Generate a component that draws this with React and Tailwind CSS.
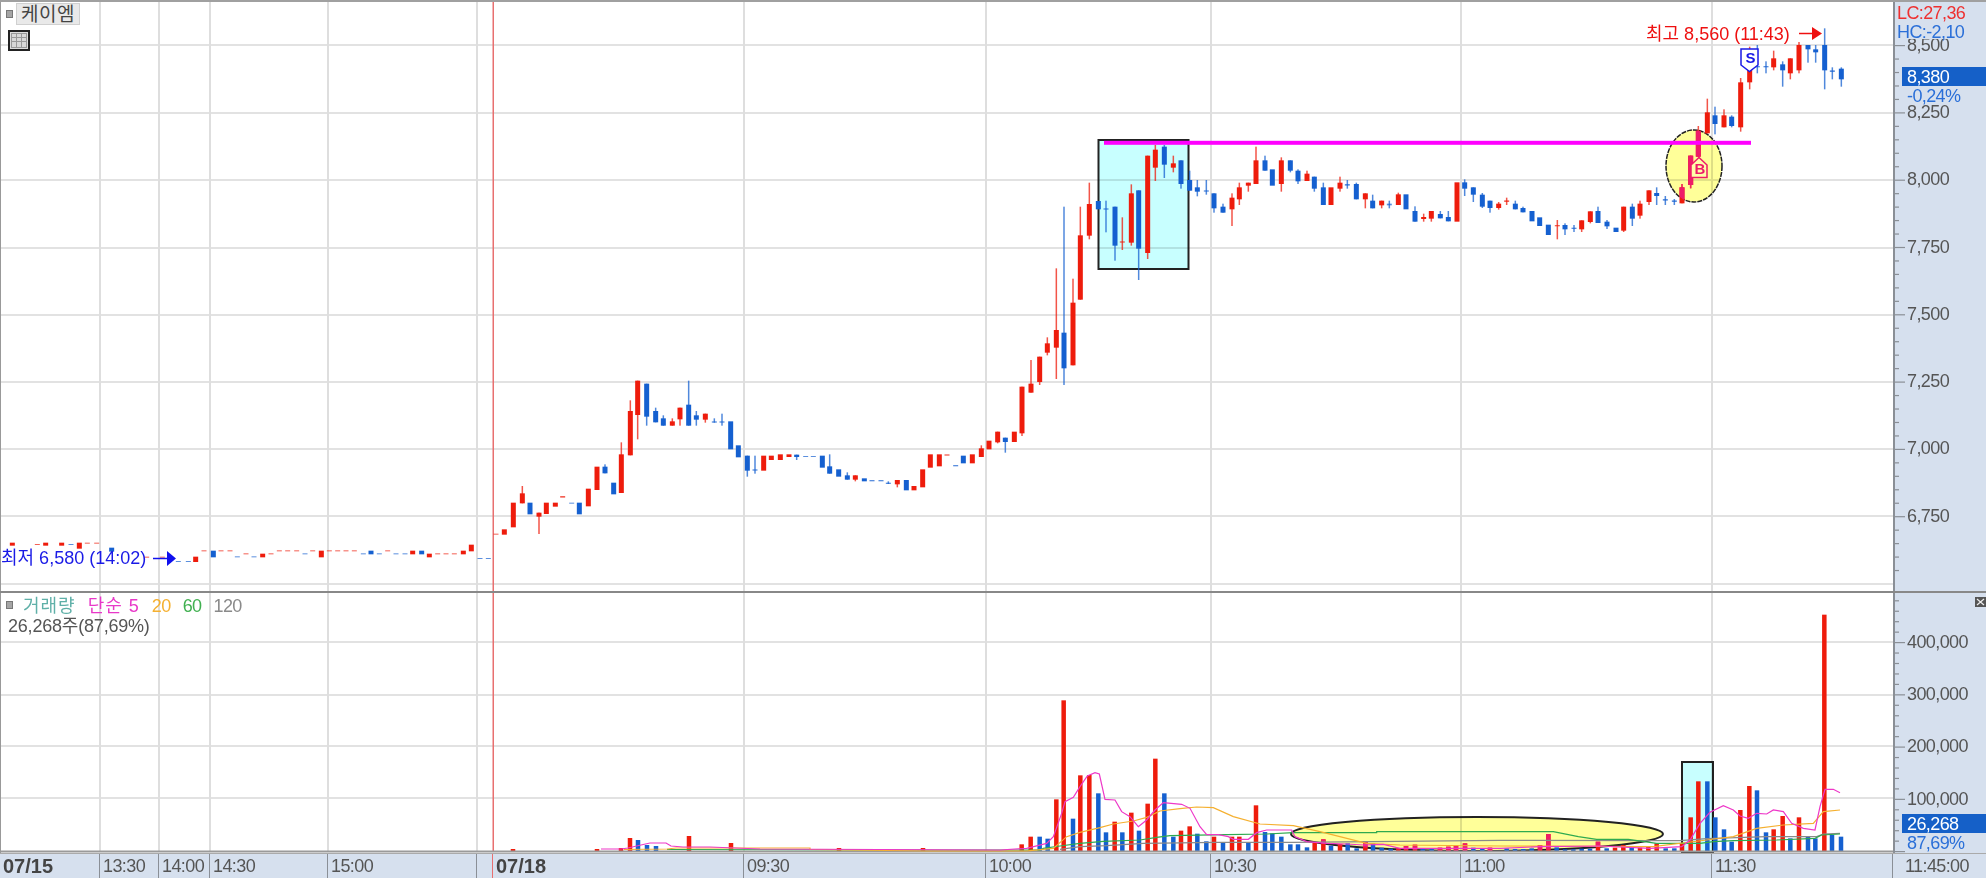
import React from "react";

const RED = "#ee1c0c";
const BLUE = "#1560d0";
const GRIDX = [100, 159, 210, 328, 477, 744, 986, 1211, 1461, 1712];

const z = (ox, oy, list) =>
  list.map(([x, wt, bt, bb, wb, c]) => ({
    x: ox + x / 3,
    wt: wt ? oy + wt / 3 : 0,
    bt: oy + bt / 3,
    bb: oy + bb / 3,
    wb: wb ? oy + wb / 3 : 0,
    c,
  }));

const candles = [
  ...z(0, 500, [
    [37,0,128,137,0,"r"],[112,0,132,135,0,"r"],[137,0,128,137,0,"r"],[185,0,128,137,0,"r"],[213,0,132,135,0,"b"],
    [238,0,128,146,0,"r"],[262,0,128,131,0,"r"],[290,0,128,131,0,"r"],[335,0,143,155,0,"b"],[440,0,170,173,0,"r"],
    [487,0,170,173,0,"r"],[535,0,183,186,0,"b"],[565,0,183,186,0,"b"],[587,0,170,186,0,"r"],[612,0,151,154,0,"r"],
    [640,0,152,172,0,"b"],[663,0,151,154,0,"r"],[690,0,151,154,0,"r"],[712,0,169,172,0,"b"],[738,0,160,163,0,"r"],
    [762,0,169,172,0,"b"],[788,0,161,172,0,"r"],[813,0,160,163,0,"r"],[838,0,151,154,0,"r"],[863,0,151,154,0,"r"],
    [890,0,151,154,0,"r"],[915,0,160,163,0,"b"],[938,0,151,154,0,"r"],[964,0,152,172,0,"r"],[988,0,151,154,0,"r"],
    [1013,0,151,154,0,"r"],[1038,0,151,154,0,"r"],[1063,0,151,154,0,"r"],[1090,0,160,163,0,"b"],[1113,0,152,163,0,"b"],
    [1138,0,160,163,0,"b"],[1163,0,151,154,0,"r"],[1188,0,160,163,0,"b"],[1215,0,160,163,0,"b"],[1238,0,152,163,0,"r"],
    [1265,0,152,163,0,"b"],[1288,0,161,172,0,"r"],[1313,0,160,163,0,"r"],[1338,0,160,163,0,"r"],[1363,0,160,163,0,"r"],
    [1390,0,152,163,0,"r"],[1414,0,134,154,0,"r"],[1440,0,174,177,0,"b"],[1465,0,174,177,0,"b"],[1488,0,101,104,0,"r"],
    [1513,0,88,104,0,"r"],
  ]),
  ...z(480, 360, [
    [100,0,428,502,0,"r"],[127,378,400,430,0,"r"],[150,0,428,463,0,"b"],[177,0,458,470,522,"r"],[199,0,428,462,0,"r"],
    [226,0,428,440,0,"r"],[248,0,408,413,0,"r"],[275,0,428,431,0,"b"],[298,0,428,463,0,"b"],[325,0,386,439,0,"r"],
    [351,0,320,390,0,"r"],[375,313,320,340,0,"b"],[401,0,368,403,0,"b"],[424,247,283,399,0,"r"],[451,121,153,286,0,"r"],
    [473,0,62,165,238,"r"],[500,0,71,170,197,"b"],[527,143,153,187,0,"b"],[550,166,175,197,0,"b"],[577,175,184,197,0,"r"],
    [600,0,143,178,197,"r"],[626,62,134,197,0,"b"],[649,153,166,179,197,"b"],[676,0,161,179,188,"r"],[703,175,184,188,0,"b"],
    [726,161,184,188,197,"b"],[752,0,184,268,0,"b"],[775,0,256,292,0,"b"],[802,0,287,332,350,"b"],[825,287,328,332,341,"b"],
    [851,0,287,332,0,"r"],[874,0,287,300,0,"r"],[901,0,283,300,0,"r"],[927,0,283,291,0,"r"],[950,0,284,291,300,"b"],
    [977,0,288,291,0,"b"],[1000,0,288,291,0,"b"],[1027,0,287,323,0,"b"],[1049,283,319,341,0,"b"],[1076,0,328,350,0,"b"],
    [1102,337,346,359,0,"b"],[1126,0,346,359,364,"r"],[1153,0,355,364,0,"b"],[1176,0,360,364,0,"b"],[1203,0,360,364,0,"b"],
    [1225,364,368,372,0,"b"],[1252,0,360,373,382,"r"],[1279,0,360,391,0,"b"],[1302,0,378,391,0,"r"],[1328,0,328,382,0,"r"],
    [1351,0,283,323,0,"r"],[1378,0,283,319,0,"r"],[1401,0,283,287,0,"r"],[1427,0,315,319,0,"b"],[1450,0,287,310,0,"b"],
    [1477,0,283,310,0,"r"],
  ]),
  ...z(960, 370, [
    [64,226,235,261,0,"r"],[87,0,212,238,0,"r"],[113,0,185,217,220,"r"],[136,0,203,216,248,"b"],[163,0,185,216,0,"r"],
    [186,0,50,190,198,"r"],[213,-30,41,68,0,"r"],
  ]),
  ...z(1000, 200, [
    [119,0,470,546,555,"r"],[142,412,430,458,466,"r"],[169,205,390,443,537,"r"],[192,20,398,505,555,"b"],[219,236,308,496,0,"r"],
    [241,20,106,299,0,"r"],
  ]),
  ...z(1040, 120, [
    [148,188,252,347,358,"r"],[175,0,243,268,0,"b"],[198,242,265,269,337,"b"],[225,0,260,377,422,"b"],[247,292,364,368,390,"r"],
    [274,193,220,368,377,"r"],[296,0,211,386,480,"b"],[323,0,107,399,417,"r"],[346,75,89,143,183,"r"],[373,75,80,134,174,"b"],
    [400,107,130,143,157,"r"],[423,0,121,192,206,"b"],[449,152,180,212,0,"b"],[472,180,202,215,229,"b"],[499,180,211,215,224,"b"],
    [522,0,220,265,278,"b"],[549,251,260,278,0,"b"],[576,220,233,268,318,"r"],[598,188,202,238,255,"r"],[625,0,188,197,215,"r"],
    [648,80,121,192,0,"r"],[675,107,121,152,0,"b"],[697,0,148,197,0,"b"],[724,112,121,192,215,"r"],[751,0,121,152,157,"b"],
    [774,148,152,184,192,"b"],[801,152,161,183,0,"r"],[823,0,170,206,215,"b"],[850,188,202,255,0,"b"],[873,0,202,255,0,"r"],
    [900,170,188,206,215,"r"],[922,180,192,197,206,"b"],[949,188,192,238,0,"b"],[976,0,220,238,265,"r"],[998,224,242,265,0,"b"],
    [1025,0,242,256,265,"r"],[1048,242,251,256,265,"b"],
  ]),
  ...z(1240, 130, [
    [475,188,193,225,0,"r"],[498,0,193,238,0,"b"],[525,229,243,275,0,"b"],[551,251,261,267,275,"r"],[574,0,243,266,275,"r"],
    [601,243,252,265,0,"b"],[625,243,261,274,0,"b"],[651,0,157,275,0,"r"],[674,148,157,176,198,"b"],[700,0,172,194,216,"b"],
    [727,189,194,230,234,"b"],[750,0,212,234,248,"b"],[776,216,221,234,239,"r"],[800,203,211,216,225,"r"],[826,212,221,238,0,"b"],
    [849,230,234,247,0,"b"],[876,0,243,274,0,"b"],[899,0,262,288,0,"b"],[925,0,284,315,0,"b"],[952,270,285,289,328,"r"],
    [975,280,285,298,315,"b"],[1002,285,293,297,306,"b"],[1025,0,271,298,306,"r"],[1051,0,244,276,280,"r"],[1074,230,243,279,0,"b"],
    [1101,270,275,289,297,"b"],[1128,0,293,306,0,"b"],[1151,0,230,302,306,"r"],[1177,221,230,266,288,"b"],[1200,212,221,257,266,"r"],
    [1227,0,181,216,225,"r"],[1250,172,189,198,225,"b"],[1276,198,207,212,225,"b"],[1303,207,211,216,225,"b"],
  ]),
  ...z(1600, 0, [
    [246,552,562,610,0,"r"],[272,0,467,555,565,"r"],[295,378,392,470,0,"r"],[322,296,337,400,0,"r"],[345,320,346,372,403,"b"],
    [372,328,346,382,0,"r"],[395,346,350,378,382,"b"],[422,234,247,382,395,"r"],[449,140,206,247,268,"r"],[472,135,198,202,220,"b"],
    [498,184,198,202,220,"b"],[521,152,175,202,211,"r"],[548,184,193,211,260,"b"],[571,0,175,220,238,"r"],[597,126,135,211,220,"r"],
    [624,0,135,148,188,"b"],[647,135,148,157,188,"b"],[674,85,135,211,268,"b"],[697,202,211,216,238,"b"],[724,202,206,238,260,"b"],
  ]),
];

const vz = (ox, oy, list) => list.map(([x, t, c]) => ({ x: ox + x / 3, t: oy + t / 3, c }));
const bars = [
  { x: 513, t: 849, c: "r" },{ x: 597, t: 849, c: "r" },{ x: 621, t: 848, c: "r" },{ x: 630, t: 838, c: "r" },{ x: 638, t: 840, c: "b" },
  { x: 647, t: 845, c: "b" },{ x: 656, t: 846, c: "b" },{ x: 689, t: 836, c: "r" },{ x: 731, t: 843, c: "r" },{ x: 839, t: 848, c: "r" },
  { x: 923, t: 848, c: "r" },
  ...vz(1000, 680, [
    [65,493,"r"],[92,470,"r"],[119,470,"b"],[143,476,"b"],[169,358,"r"],[191,61,"r"],[219,416,"b"],[241,286,"r"],[268,285,"r"],
    [295,340,"b"],[318,457,"b"],[344,425,"r"],[367,457,"b"],[394,398,"r"],[417,452,"b"],[443,371,"r"],[466,236,"r"],[493,340,"b"],
    [520,470,"b"],[543,452,"r"],[569,439,"r"],[592,461,"b"],[619,484,"b"],[642,470,"r"],[669,488,"b"],[696,470,"r"],[718,470,"r"],
    [745,488,"b"],[768,376,"r"],[795,456,"b"],[817,460,"b"],[844,470,"b"],[871,493,"b"],[894,493,"b"],[921,502,"b"],[944,488,"r"],
    [970,478,"r"],[993,497,"b"],[1020,493,"r"],[1043,490,"b"],[1070,505,"b"],[1096,484,"r"],[1119,490,"b"],[1145,503,"b"],[1172,506,"b"],
    [1195,505,"r"],[1218,498,"r"],[1245,494,"r"],[1268,505,"b"],[1295,505,"b"],[1320,503,"r"],[1345,500,"r"],[1368,497,"r"],[1395,490,"r"],
    [1420,503,"b"],[1447,507,"b"],[1470,503,"r"],
  ]),
  ...vz(1500, 580, [
    [20,805,"b"],[45,807,"b"],[70,807,"b"],[95,805,"b"],[120,795,"r"],[145,762,"r"],[170,802,"b"],[195,808,"b"],[220,808,"b"],
    [245,806,"b"],[270,806,"b"],[294,785,"r"],[320,805,"b"],[345,803,"r"],[370,795,"r"],[395,802,"b"],[420,803,"r"],[445,800,"r"],
    [470,790,"r"],[497,805,"b"],[523,805,"b"],[546,790,"r"],[572,712,"r"],[595,604,"r"],[622,604,"b"],[646,712,"b"],[672,748,"b"],
    [695,785,"b"],[721,690,"r"],[748,618,"r"],[771,631,"b"],[798,757,"b"],[821,748,"r"],[848,708,"r"],[871,775,"b"],[897,712,"r"],
    [924,770,"b"],[946,775,"b"],[973,104,"r"],[996,765,"b"],[1023,770,"b"],
  ]),
];

const pts = (ox, oy, list) => list.map(([x, y]) => `${ox + x / 3},${oy + y / 3}`).join(" ");
const pinkLine =
  "601,849 621,849 628,848 641,845 650,843 666,843 671,846 683,847 710,847 760,849 1000,850 " +
  pts(1000, 680, [[80,505],[140,490],[160,470],[185,400],[195,365],[220,352],[240,320],[262,288],[285,278],[298,282],[315,358],[345,360],[365,395],[390,410],[415,440],[440,420],[465,390],[490,368],[545,373],[570,385],[600,440],[620,464],[655,464],[685,470],[700,478],[745,478],[770,458],[800,450],[875,450],[885,470],[920,485],[980,490],[1040,492],[1090,495],[1150,493],[1200,505],[1500,505]]) + " " +
  pts(1500, 580, [[120,800],[300,798],[450,805],[545,800],[570,780],[600,730],[630,697],[670,677],[700,690],[720,708],[745,715],[770,700],[800,702],[820,690],[850,695],[875,730],[910,745],[945,750],[960,680],[975,628],[1000,628],[1020,638]]);
const orangeLine =
  "624,849.5 667,849 676,848 810,848 810,849.5 927,851 1027,851 " +
  pts(1000, 680, [[90,512],[160,505],[200,470],[240,457],[300,443],[340,432],[400,423],[440,412],[480,393],[540,386],[590,381],[640,383],[700,410],[780,432],[880,437],[960,455],[1100,490],[1200,495],[1500,498]]) + " " +
  pts(1500, 580, [[460,800],[620,780],[700,770],[770,745],[850,735],[940,730],[970,695],[1020,690]]);
const greenLine =
  "667,849.5 927,850 1040,850 " +
  pts(1000, 680, [[130,505],[180,498],[240,490],[310,484],[420,480],[470,472],[510,467],[680,464],[800,462],[880,458],[1130,458],[1130,455],[1500,455]]) + " " +
  pts(1500, 580, [[160,755],[235,770],[290,778],[385,778],[470,790],[600,790],[640,785],[700,782],[830,780],[945,775],[965,765],[1020,762]]);
const grayLine =
  pts(1000, 680, [[180,508],[240,500],[320,497],[430,490],[650,487],[880,487],[1500,481]]) + " " +
  pts(1500, 580, [[470,782],[540,782],[620,776],[800,770],[950,770],[970,762],[1020,760]]);

function Candle({ k, tint }) {
  const color = tint || (k.c === "r" ? RED : BLUE);
  const top = k.wt || k.bt;
  const bot = k.wb || k.bb;
  const thin = k.bb - k.bt < 2;
  return (
    <g>
      {(k.wt || k.wb) ? <rect x={k.x - 0.75} y={top} width="1.5" height={bot - top} fill={color} opacity="0.75" /> : null}
      <rect x={k.x - 2.5} y={k.bt} width="5" height={Math.max(k.bb - k.bt, 1)} fill={color} opacity={thin ? 0.7 : 1} />
    </g>
  );
}

function Grid({ ys, top, bottom }) {
  return (
    <g>
      {ys.map((y) => (
        <rect key={y} x="0" y={y - 1} width="1893" height="2" fill="#e2e2e2" />
      ))}
      {GRIDX.map((x) => (
        <rect key={x} x={x - 1} y={top} width="2" height={bottom - top} fill="#dedede" />
      ))}
      <rect x="492.5" y={top} width="1.5" height={bottom - top} fill="#e87070" />
    </g>
  );
}

function PriceChart() {
  return (
    <svg className="absolute inset-0" width="1892" height="589" viewBox="1 2 1892 589">
      <defs>
        <clipPath id="circ">
          <ellipse cx="1694" cy="166" rx="28" ry="36" />
        </clipPath>
      </defs>
      <Grid ys={[45, 113, 180, 248, 315, 382, 449, 516, 584]} top={0} bottom={591} />
      <rect x="1098.5" y="140" width="90" height="129" fill="#c8ffff" stroke="#222" strokeWidth="2" className="mix-blend-multiply" />
      <ellipse cx="1694" cy="166" rx="28" ry="36" fill="#ffff99" stroke="#222" strokeWidth="1.5" strokeDasharray="5 1" className="mix-blend-multiply" />
      {candles.map((k, i) => (
        <Candle key={i} k={k} />
      ))}
      <g clipPath="url(#circ)">
        {candles.filter((k) => k.x > 1670 && k.x < 1720 && k.c === "r").map((k, i) => (
          <Candle key={i} k={k} tint="#ee1c68" />
        ))}
      </g>
      <rect x="1104" y="140.8" width="647" height="4" fill="#ff00ff" />
      <path d="M1691 177.5 V165 L1699 157.5 L1707 165 V177.5 Z" fill="#ffffa8" stroke="#ee1c68" strokeWidth="1.5" />
      <path d="M1741 49 H1758 V65 L1749.5 71.5 L1741 65 Z" fill="#fff" stroke="#1a1ae6" strokeWidth="1.5" />
      <path d="M1799 33.5 H1813" stroke="#ee1010" strokeWidth="1.5" />
      <path d="M1812 27 L1822 33.5 L1812 40 Z" fill="#ee1010" />
      <path d="M153 558.5 H168" stroke="#1010ee" strokeWidth="1.5" />
      <path d="M167 551 L176 558.5 L167 566 Z" fill="#1010ee" />
    </svg>
  );
}

function VolumeChart() {
  return (
    <svg className="absolute inset-0" width="1892" height="260" viewBox="1 593 1892 260">
      <defs>
        <clipPath id="ell">
          <ellipse cx="1477" cy="834" rx="186" ry="17" />
        </clipPath>
      </defs>
      <Grid ys={[642, 695, 746, 798]} top={593} bottom={852} />
      <rect x="1682" y="762" width="31" height="90" fill="#c8ffff" stroke="#222" strokeWidth="2" className="mix-blend-multiply" />
      <ellipse cx="1477" cy="834" rx="186" ry="17" fill="#ffff99" stroke="#222" strokeWidth="2" className="mix-blend-multiply" />
      {bars.map((b, i) => (
        <rect key={i} x={b.x - 2.25} y={b.t} width="4.5" height={851 - b.t} fill={b.c === "r" ? RED : BLUE} />
      ))}
      <g clipPath="url(#ell)">
        {bars.filter((b) => b.c === "r" && b.x > 1291 && b.x < 1663).map((b, i) => (
          <rect key={i} x={b.x - 2.25} y={b.t} width="4.5" height={851 - b.t} fill="#ee1c68" />
        ))}
      </g>
      <rect x="0" y="850.5" width="1893" height="2" fill="#9a9a9a" />
      <polyline points={grayLine} fill="none" stroke="#8a8a8a" strokeWidth="1.2" />
      <polyline points={greenLine} fill="none" stroke="#2faa50" strokeWidth="1.2" />
      <polyline points={orangeLine} fill="none" stroke="#f5b030" strokeWidth="1.2" />
      <polyline points={pinkLine} fill="none" stroke="#ee38c8" strokeWidth="1.2" />
    </svg>
  );
}

function AxisTicks({ count, start, step, every, height }) {
  const ticks = Array.from({ length: count }, (_, i) => start + i * step);
  return (
    <svg className="absolute inset-0" width="93" height={height}>
      {ticks.map((y, i) => (
        <rect key={i} x="0" y={y} width={i % every === 0 ? 10 : 4} height="1.2" fill="#8a8f96" />
      ))}
    </svg>
  );
}

function Square() {
  return <span className="block w-[7px] h-[8px] bg-[#a5a5a5] border border-[#777]" />;
}

const priceLabels = ["8,500", "8,250", "8,000", "7,750", "7,500", "7,250", "7,000", "6,750"];
const volLabels = ["400,000", "300,000", "200,000", "100,000"];
const times = [
  { w: "w-[100px]", t: "07/15", b: true },
  { w: "w-[59px]", t: "13:30" },
  { w: "w-[51px]", t: "14:00" },
  { w: "w-[118px]", t: "14:30" },
  { w: "w-[149px]", t: "15:00" },
  { w: "w-[16px]", t: "" },
  { w: "w-[251px]", t: "07/18", b: true },
  { w: "w-[242px]", t: "09:30" },
  { w: "w-[225px]", t: "10:00" },
  { w: "w-[250px]", t: "10:30" },
  { w: "w-[251px]", t: "11:00" },
  { w: "w-[181px]", t: "11:30" },
];

export default function App() {
  return (
    <div className="w-[1986px] h-[878px] flex flex-col overflow-hidden bg-white text-[18px] tracking-[-0.6px] leading-none text-[#555] font-['Liberation_Sans','Noto_Sans_CJK_KR',sans-serif]">
      <div className="flex h-[593px] border-t-2 border-b-2 border-t-[#a0a0a0] border-b-[#888]">
        <div className="relative w-[1893px] border-l border-[#999]">
          <PriceChart />
          <div className="absolute left-[5px] top-[8px]"><Square /></div>
          <div className="absolute left-[15px] top-[1px] w-[64px] h-[22px] flex items-center justify-center bg-[#e9e9e9] border border-[#d0d0d0] text-[#444] text-[19px] tracking-[0.5px]">케이엠</div>
          <div className="absolute left-[7px] top-[28px] w-[22px] h-[21px] border-2 border-[#222] bg-[#ddd] flex items-center justify-center">
            <svg width="16" height="15" viewBox="0 0 16 15">
              <rect x="0.5" y="0.5" width="15" height="14" fill="#d8d8d8" stroke="#999" />
              <path d="M0 4.5H16M0 8.5H16M5.5 0V15M10.5 0V15" stroke="#999" />
            </svg>
          </div>
          <div className="absolute left-[1645px] top-[23px] text-[#ee1010] tracking-normal whitespace-nowrap">최고 8,560 (11:43)</div>
          <div className="absolute left-0 top-[547px] text-[#1a1ae6] tracking-normal whitespace-nowrap">최저 6,580 (14:02)</div>
          <div className="absolute left-[1743px] top-[48px] w-[13px] text-center text-[15px] tracking-normal font-bold text-[#1a1ae6]">S</div>
          <div className="absolute left-[1693px] top-[159px] w-[12px] text-center text-[15px] tracking-normal font-bold text-[#ee1c68]">B</div>
        </div>
        <div className="relative flex-1 bg-[#d6e0ee] border-l-2 border-[#8a8f96]">
          <AxisTicks count={45} start={-24.3} step={13.46} every={5} height={589} />
          <div className="relative flex flex-col pt-[9px]">
            {priceLabels.map((p) => (
              <div key={p} className="h-[67.3px] flex items-center pl-[12px]">{p}</div>
            ))}
          </div>
          <div className="absolute left-0 top-0 w-full h-[37px] bg-[#d6e0ee] flex flex-col pl-[2px] pt-[2px] gap-[1px]">
            <span className="text-[#ee3030]">LC:27,36</span>
            <span className="text-[#2a6fd8]">HC:-2,10</span>
          </div>
          <div className="absolute left-[7px] right-0 top-[65px] h-[19px] bg-[#1560c8] text-white flex items-center pl-[5px]">8,380</div>
          <div className="absolute left-[12px] top-[85px] text-[#2a6fd8]">-0,24%</div>
        </div>
      </div>
      <div className="flex h-[260px]">
        <div className="relative w-[1893px] border-l border-[#999]">
          <VolumeChart />
          <div className="absolute left-[5px] top-[8px]"><Square /></div>
          <div className="absolute left-[22px] top-[4px] flex items-center gap-[12px] whitespace-nowrap">
            <span className="text-[#5fb0a8] tracking-[1px]">거래량</span>
            <span className="text-[#e838c8] tracking-[1px]">단순 5</span>
            <span className="text-[#f5b030]">20</span>
            <span className="text-[#40b050]">60</span>
            <span className="text-[#8a8a8a]">120</span>
          </div>
          <div className="absolute left-[7px] top-[24px] tracking-[-0.2px] whitespace-nowrap">26,268주(87,69%)</div>
        </div>
        <div className="relative flex-1 bg-[#d6e0ee] border-l-2 border-[#8a8f96]">
          <AxisTicks count={27} start={-3.25} step={10.45} every={5} height={260} />
          <div className="relative flex flex-col pt-[23px]">
            {volLabels.map((p) => (
              <div key={p} className="h-[52.2px] flex items-center pl-[12px]">{p}</div>
            ))}
          </div>
          <div className="absolute left-[7px] right-0 top-[221px] h-[19px] bg-[#1560c8] text-white flex items-center pl-[5px]">26,268</div>
          <div className="absolute left-[12px] top-[241px] text-[#2a6fd8]">87,69%</div>
          <div className="absolute right-0 top-[4px] w-[11px] h-[10px] bg-[#555] flex items-center justify-center">
            <svg width="9" height="8" viewBox="0 0 9 8"><path d="M1 1L8 7M8 1L1 7" stroke="#eee" strokeWidth="1.2" /></svg>
          </div>
        </div>
      </div>
      <div className="flex flex-1 bg-[#d6e0ee] border-t border-[#aaa]">
        {times.map((c, i) => (
          <div
            key={i}
            className={`${c.w} h-full flex items-center pl-[3px] border-r ${i === 5 ? "border-r-[#e87070]" : "border-r-[#8a8f96]"} ${c.b ? "font-bold text-[#444] text-[20px] tracking-normal" : ""}`}
          >
            {c.t}
          </div>
        ))}
        <div className="flex-1 h-full flex items-center pl-[12px]">11:45:00</div>
      </div>
    </div>
  );
}
